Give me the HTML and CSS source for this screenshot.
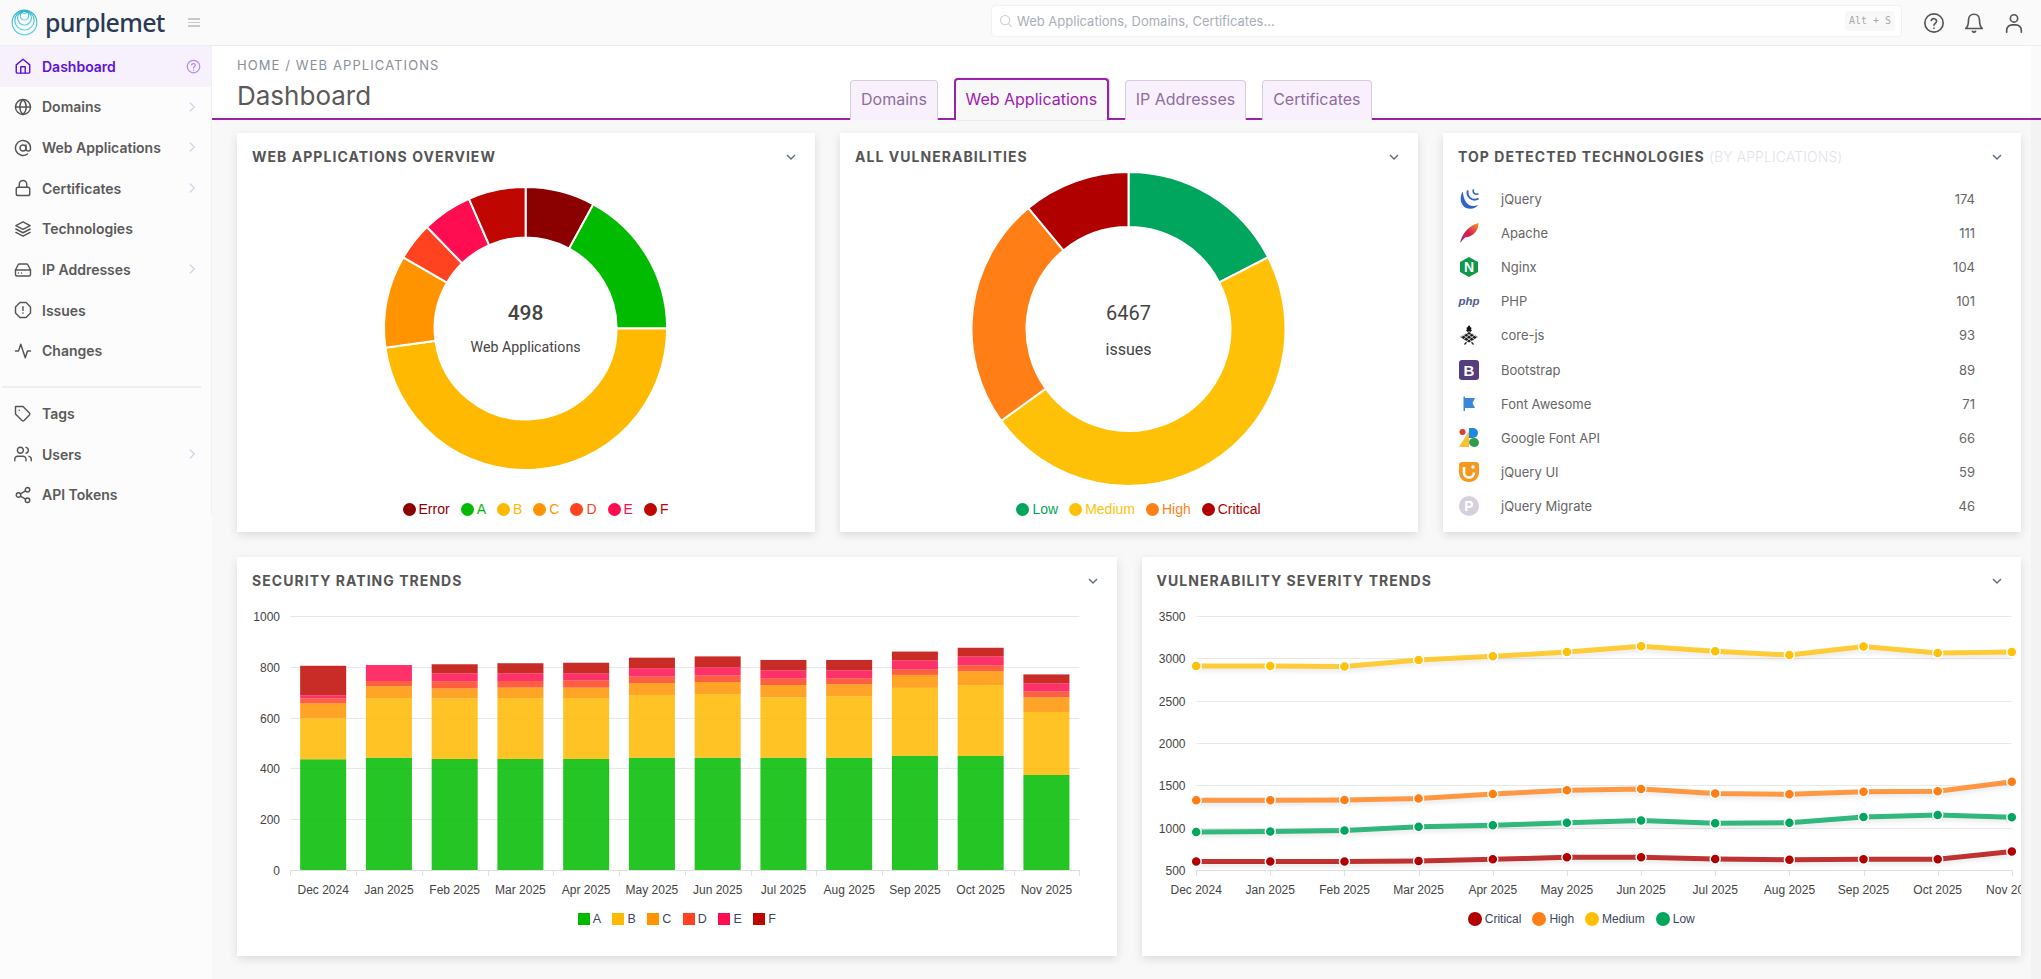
FILE: index.html
```html
<!DOCTYPE html>
<html lang="en">
<head>
<meta charset="utf-8">
<title>Dashboard - Purplemet</title>
<link rel="stylesheet" href="styles.css">
</head>
<body>
<svg class="defs" width="0" height="0" aria-hidden="true">
  <defs>
    <linearGradient id="logoGrad" x1="0" y1="0" x2="0" y2="1"><stop offset="0" stop-color="#2fb4c9"/><stop offset="1" stop-color="#63d3ee"/></linearGradient>
    <linearGradient id="featherGrad" x1="0" y1="1" x2="1" y2="0"><stop offset="0" stop-color="#8a2b8f"/><stop offset=".5" stop-color="#d9234a"/><stop offset="1" stop-color="#f79a2a"/></linearGradient>
  </defs>
</svg>
<div class="app">
  <header class="topbar">
    <div class="brand">
      <svg class="brand-mark" viewBox="0 0 28 28" fill="none" stroke="url(#logoGrad)" stroke-width="1.2"><circle cx="14" cy="14" r="12.8"/><circle cx="14" cy="11.800" r="10"/><circle cx="14" cy="9.400" r="7.200"/><circle cx="14" cy="7" r="4.400"/><path d="M11.500 3.400a2.800 2.800 0 0 0 5 0"/></svg>
      <span class="brand-name">purplemet</span>
      <span class="menu-toggle"><i></i><i></i><i></i></span>
    </div>
    <div class="search">
      <svg class="search-icon" viewBox="0 0 24 24" fill="none" stroke="#ccd0d6" stroke-width="1.8"><circle cx="10.5" cy="10.5" r="8"/><path d="M16.5 16.5l5 5"/></svg>
      <span class="search-text">Web Applications, Domains, Certificates...</span>
      <kbd class="search-key">Alt + S</kbd>
    </div>
    <div class="top-actions">
      <svg class="top-icon" viewBox="0 0 24 24"><circle cx="12" cy="12" r="10"/><path d="M9 9.2a3 3 0 0 1 5.8 1c0 2-2.8 2.4-2.8 4.2"/><path d="M12 17.6v.2"/></svg>
      <svg class="top-icon" viewBox="0 0 24 24"><path d="M12 2.5c-3.6 0-6 2.7-6 6.2 0 5.6-1.2 7.800-3 9.300h18c-1.800-1.500-3-3.700-3-9.300 0-3.500-2.400-6.200-6-6.200z"/><path d="M10.300 21a2 2 0 0 0 3.400 0"/></svg>
      <svg class="top-icon" viewBox="0 0 24 24"><circle cx="12" cy="7" r="4"/><path d="M4 22v-2a6 6 0 0 1 6-6h4a6 6 0 0 1 6 6v2"/></svg>
    </div>
  </header>

  <div class="shell">
    <aside class="sidebar">
      <nav class="nav">
        <a class="nav-item is-active"><svg class="nav-icon" viewBox="0 0 24 24"><path d="M3 10.500L12 3l9 7.500V20a1.500 1.500 0 0 1-1.500 1.500h-15A1.500 1.500 0 0 1 3 20z"/><path d="M9 21.500V13h6v8.500"/></svg><span>Dashboard</span><svg class="nav-help" viewBox="0 0 24 24"><circle cx="12" cy="12" r="10"/><path d="M9 9.200a3 3 0 0 1 5.800 1c0 2-2.800 2.400-2.800 4.200"/><path d="M12 17.600v.2"/></svg></a>
        <a class="nav-item"><svg class="nav-icon" viewBox="0 0 24 24"><circle cx="12" cy="12" r="10"/><path d="M2 12h20"/><path d="M12 2c3 2.800 4.300 6.200 4.300 10S15 19.200 12 22c-3-2.800-4.300-6.200-4.300-10S9 4.800 12 2z"/></svg><span>Domains</span><svg class="nav-chevron" viewBox="0 0 24 24"><path d="M9 6l6 6-6 6"/></svg></a>
        <a class="nav-item"><svg class="nav-icon" viewBox="0 0 24 24"><circle cx="12" cy="12" r="4"/><path d="M16 8v5a3 3 0 0 0 6 0v-1a10 10 0 1 0-4 8"/></svg><span>Web Applications</span><svg class="nav-chevron" viewBox="0 0 24 24"><path d="M9 6l6 6-6 6"/></svg></a>
        <a class="nav-item"><svg class="nav-icon" viewBox="0 0 24 24"><rect x="3" y="11" width="18" height="11" rx="2.500"/><path d="M7 11V7a5 5 0 0 1 10 0v4"/></svg><span>Certificates</span><svg class="nav-chevron" viewBox="0 0 24 24"><path d="M9 6l6 6-6 6"/></svg></a>
        <a class="nav-item"><svg class="nav-icon" viewBox="0 0 24 24"><path d="M12 2.500L2.500 7.500 12 12.500l9.500-5z"/><path d="M2.500 12L12 17l9.500-5"/><path d="M2.500 16.500L12 21.500l9.500-5"/></svg><span>Technologies</span></a>
        <a class="nav-item"><svg class="nav-icon" viewBox="0 0 24 24"><path d="M22 12H2"/><path d="M5.500 5L2 12v6a2 2 0 0 0 2 2h16a2 2 0 0 0 2-2v-6l-3.500-7a2 2 0 0 0-1.800-1H7.300a2 2 0 0 0-1.800 1z"/><path d="M6 16h.01M10 16h.01"/></svg><span>IP Addresses</span><svg class="nav-chevron" viewBox="0 0 24 24"><path d="M9 6l6 6-6 6"/></svg></a>
        <a class="nav-item"><svg class="nav-icon" viewBox="0 0 24 24"><path d="M7.900 2h8.200L22 7.900v8.200L16.100 22H7.900L2 16.100V7.900z"/><path d="M12 7.500v5"/><path d="M12 16v.2"/></svg><span>Issues</span></a>
        <a class="nav-item"><svg class="nav-icon" viewBox="0 0 24 24"><path d="M22 12h-4l-3 9L9 3l-3 9H2"/></svg><span>Changes</span></a>
        <hr class="nav-divider">
        <a class="nav-item"><svg class="nav-icon" viewBox="0 0 24 24"><path d="M20.600 13.400l-7.200 7.200a2 2 0 0 1-2.800 0L2 12V2h10l8.600 8.600a2 2 0 0 1 0 2.800z"/><path d="M7 7h.01"/></svg><span>Tags</span></a>
        <a class="nav-item"><svg class="nav-icon" viewBox="0 0 24 24"><path d="M16 21v-2a4 4 0 0 0-4-4H5a4 4 0 0 0-4 4v2"/><circle cx="8.500" cy="7" r="4"/><path d="M23 21v-2a4 4 0 0 0-3-3.900"/><path d="M16 3.100a4 4 0 0 1 0 7.800"/></svg><span>Users</span><svg class="nav-chevron" viewBox="0 0 24 24"><path d="M9 6l6 6-6 6"/></svg></a>
        <a class="nav-item"><svg class="nav-icon" viewBox="0 0 24 24"><circle cx="18" cy="5" r="3"/><circle cx="6" cy="12" r="3"/><circle cx="18" cy="19" r="3"/><path d="M8.600 13.500l6.800 4M15.400 6.500l-6.800 4"/></svg><span>API Tokens</span></a>
      </nav>
    </aside>

    <main class="main">
      <div class="page-head">
        <div class="page-title">
          <div class="crumbs">HOME / WEB APPLICATIONS</div>
          <h1>Dashboard</h1>
        </div>
        <div class="tabs">
          <a class="tab">Domains</a>
          <a class="tab is-active">Web Applications</a>
          <a class="tab">IP Addresses</a>
          <a class="tab">Certificates</a>
        </div>
      </div>

      <div class="content">
        <div class="row row-three">
          <section class="card">
            <div class="card-head"><h2>Web Applications Overview</h2><svg class="card-chevron" viewBox="0 0 24 24"><path d="M6 9l6 6 6-6"/></svg></div>
            <div class="donut" id="donutApps"></div>
            <ul class="legend legend-donut">
              <li class="c-error"><i></i>Error</li><li class="c-a"><i></i>A</li><li class="c-b"><i></i>B</li><li class="c-c"><i></i>C</li><li class="c-d"><i></i>D</li><li class="c-e"><i></i>E</li><li class="c-f"><i></i>F</li>
            </ul>
          </section>
          <section class="card">
            <div class="card-head"><h2>All Vulnerabilities</h2><svg class="card-chevron" viewBox="0 0 24 24"><path d="M6 9l6 6 6-6"/></svg></div>
            <div class="donut" id="donutVulns"></div>
            <ul class="legend legend-donut">
              <li class="c-low"><i></i>Low</li><li class="c-medium"><i></i>Medium</li><li class="c-high"><i></i>High</li><li class="c-critical"><i></i>Critical</li>
            </ul>
          </section>
          <section class="card">
            <div class="card-head"><h2>Top Detected Technologies <small>(by applications)</small></h2><svg class="card-chevron" viewBox="0 0 24 24"><path d="M6 9l6 6 6-6"/></svg></div>
            <ul class="tech-list">
              <li><svg class="tech-icon" viewBox="0 0 20 20" fill="none" stroke="#2f63c4"><path d="M3.800 2.500C-.500 9 2 19.500 11 19.800c3.500.1 6.500-1.500 8.500-4.300-6 3.500-14.500 1.500-15.700-13z" fill="#2f63c4" stroke="none"/><path d="M8.800 1.500c-1.500 5.500 3.500 11.500 10.700 8.200" stroke-width="1.900"/><path d="M14.500.3c-1.200 3 1 6 5 4.500" stroke-width="1.500"/></svg><span>jQuery</span><b>174</b></li>
              <li><svg class="tech-icon" viewBox="0 0 20 20"><path d="M1 20C3 11 9 3 19.500 0 20 6 15 14 6 14.500 4.500 16 3 18 1 20z" fill="url(#featherGrad)"/></svg><span>Apache</span><b>111</b></li>
              <li><svg class="tech-icon" viewBox="0 0 20 20"><path d="M10 0l9 5v10l-9 5-9-5V5z" fill="#0b9a4a"/><text class="tech-letter" x="10" y="15" font-size="14">N</text></svg><span>Nginx</span><b>104</b></li>
              <li><svg class="tech-icon" viewBox="0 0 20 20"><text class="tech-php" x="10" y="14">php</text></svg><span>PHP</span><b>101</b></li>
              <li><svg class="tech-icon" viewBox="0 0 20 20"><path d="M10 0l1.500 2.200 1.300.8-1 1.200 1.200 1.300L10 8 7 5.500l1.200-1.300-1-1.200 1.300-.8z" fill="#111"/><path d="M10 6.500l8.800 5.500L10 17.500 1.200 12z" fill="#1c1c1c"/><path d="M4 9.800l8.500 6.200M7 8l8.500 6.200M10 6.500l8 5.800M16 9.800L7.500 16M13 8l-8.500 6.200M10 6.500l-8 5.800" stroke="#fff" stroke-width=".7"/><path d="M5.500 19.500l2-2.200M14.500 19.500l-2-2.200" stroke="#222" stroke-width="1.300"/></svg><span>core-js</span><b>93</b></li>
              <li><svg class="tech-icon" viewBox="0 0 20 20"><rect width="20" height="20" rx="3" fill="#563d7c"/><text class="tech-letter" x="10" y="15.500" font-size="15">B</text></svg><span>Bootstrap</span><b>89</b></li>
              <li><svg class="tech-icon" viewBox="0 0 20 20"><path d="M4.500 2.500h1.500v1.500h10l-2.500 5 2.500 5H6v3H4.500z" fill="#3a87d9"/></svg><span>Font Awesome</span><b>71</b></li>
              <li><svg class="tech-icon" viewBox="0 0 20 20"><path d="M0 19L10 3v16z" fill="#fbc02d"/><circle cx="3.500" cy="4" r="3" fill="#e53935"/><path d="M10 0h4a5 5 0 0 1 0 10h-4z" fill="#1e88e5"/><path d="M15 19a5 5 0 0 1-5-5 5 5 0 0 1 5-4 5 5 0 0 1 5 4.500 5 5 0 0 1-5 4.500z" fill="#2e9b4f"/></svg><span>Google Font API</span><b>66</b></li>
              <li><svg class="tech-icon" viewBox="0 0 20 20"><path d="M0 3a3 3 0 0 1 3-3h14a3 3 0 0 1 3 3v7c0 6-4 10-10 10S0 16 0 10z" fill="#f7971d"/><path d="M5 5v5.500a5 5 0 0 0 10 0" fill="none" stroke="#fff" stroke-width="2.600"/><circle cx="14" cy="5" r="1.800" fill="#fff"/></svg><span>jQuery UI</span><b>59</b></li>
              <li><svg class="tech-icon" viewBox="0 0 20 20"><circle cx="10" cy="10" r="10" fill="#d6d0de"/><text class="tech-letter" x="10" y="15" font-size="14">P</text></svg><span>jQuery Migrate</span><b>46</b></li>
            </ul>
          </section>
        </div>

        <div class="row row-two">
          <section class="card">
            <div class="card-head"><h2>Security Rating Trends</h2><svg class="card-chevron" viewBox="0 0 24 24"><path d="M6 9l6 6 6-6"/></svg></div>
            <div class="trend" id="barChart"></div>
            <ul class="legend legend-trend legend-bars">
              <li class="c-a"><i class="square"></i>A</li><li class="c-b"><i class="square"></i>B</li><li class="c-c"><i class="square"></i>C</li><li class="c-d"><i class="square"></i>D</li><li class="c-e"><i class="square"></i>E</li><li class="c-f"><i class="square"></i>F</li>
            </ul>
          </section>
          <section class="card">
            <div class="card-head"><h2>Vulnerability Severity Trends</h2><svg class="card-chevron" viewBox="0 0 24 24"><path d="M6 9l6 6 6-6"/></svg></div>
            <div class="trend" id="lineChart"></div>
            <ul class="legend legend-trend legend-lines">
              <li class="c-critical"><i></i>Critical</li><li class="c-high"><i></i>High</li><li class="c-medium"><i></i>Medium</li><li class="c-low"><i></i>Low</li>
            </ul>
          </section>
        </div>
      </div>
      <div class="scroll-track"></div>
    </main>
  </div>
</div>
<script src="charts.js"></script>
</body>
</html>
```
FILE: styles.css
```css
* { box-sizing: border-box; }
html, body { margin: 0; height: 100%; overflow: hidden; }
body { font-family: Inter, "Liberation Sans", sans-serif; color: #555; background: #f8f8f8; }
.defs { position: absolute; }
ul { list-style: none; margin: 0; padding: 0; }
h1, h2 { margin: 0; }

.app { display: flex; flex-direction: column; height: 979px; }

/* top bar */
.topbar { flex: 0 0 46px; display: flex; align-items: flex-start; background: #fafafa; border-bottom: 1px solid #eeeeee; }
.brand { flex: 0 0 991px; display: flex; align-items: center; height: 45px; padding-left: 11px; }
.brand-mark { width: 27px; height: 27px; flex: none; }
.brand-name { margin-left: 7px; font-family: "Noto Sans", sans-serif; font-size: 25px; font-weight: 500; letter-spacing: -.7px; line-height: 45px; color: #2b3a55; }
.menu-toggle { margin-left: 23px; display: flex; flex-direction: column; gap: 2px; width: 12px; }
.menu-toggle i { display: block; height: 1.5px; background: #c9c9c9; }
.search { flex: 0 0 911px; height: 32px; margin-top: 5px; display: flex; align-items: center; padding: 0 6px 0 7px; background: #fff; border: 1px solid #f1f1f1; border-radius: 4px; }
.search-icon { width: 14px; height: 14px; flex: none; }
.search-text { margin-left: 4px; font-size: 13px; color: #a9aeb8; }
.search-key { margin-left: auto; width: 50px; height: 20px; line-height: 19px; text-align: center; font-family: "DejaVu Sans Mono", monospace; font-size: 10px; color: #a8a8a8; background: #f8f8f8; border-radius: 4px; }
.top-actions { flex: 1; display: flex; gap: 18px; padding: 12px 0 0 21px; }
.top-icon { width: 22px; height: 22px; fill: none; stroke: #555; stroke-width: 1.800; stroke-linecap: round; stroke-linejoin: round; }

/* sidebar */
.shell { flex: 1; display: flex; min-height: 0; }
.sidebar { flex: 0 0 212px; background: #fcfcfc; }
.nav { height: 469px; border-right: 1px solid #f0f0f0; display: flex; flex-direction: column; }
.nav-item { position: relative; flex: 0 0 40.660px; display: flex; align-items: center; padding-left: 14px; font-size: 14px; font-weight: 600; color: #5a5a5a; }
.nav-item span { margin-left: 10px; }
.nav-icon { width: 18px; height: 18px; flex: none; fill: none; stroke: #555; stroke-width: 1.900; stroke-linecap: round; stroke-linejoin: round; }
.nav-item.is-active { background: #f7f0fd; color: #5c14d4; }
.nav-item.is-active .nav-icon { stroke: #5c14d4; }
.nav-help { position: absolute; left: 186px; top: 13px; width: 15px; height: 15px; fill: none; stroke: #b48af0; stroke-width: 2; stroke-linecap: round; }
.nav-chevron { position: absolute; left: 183px; top: 11px; width: 18px; height: 18px; fill: none; stroke: #dcd3f4; stroke-width: 2; }
.nav-divider { flex: none; width: 199px; height: 2px; margin: 15px 0 5px 2px; border: 0; background: #eeeeee; }

/* main */
.main { position: relative; flex: 1; min-width: 0; display: flex; flex-direction: column; }
.page-head { flex: 0 0 74px; display: flex; align-items: flex-end; background: #fff; border-bottom: 2px solid #9c22ab; }
.page-title { flex: 0 0 638px; align-self: stretch; padding: 11px 0 0 25px; }
.crumbs { font-size: 13px; line-height: 16px; letter-spacing: 1.090px; color: #8a8f99; }
h1 { margin-top: 6px; font-size: 26px; line-height: 34px; font-weight: 400; color: #5a5a5a; }
.tabs { display: flex; gap: 16px; align-items: flex-end; margin-bottom: -2px; }
.tab { height: 40px; padding: 0 10px; line-height: 36px; font-size: 16px; color: #8f6d9e; background: #f8f0fd; border: 1px solid #d8ccd8; border-bottom: 0; border-radius: 4px 4px 0 0; }
.tab.is-active { height: 42px; padding: 0 9.500px; line-height: 38px; color: #a020b0; background: #f8f8f8; border: 2px solid #9c22ab; border-bottom: 0; box-shadow: 1px 0 2px rgba(0, 0, 0, .2); }
.content { flex: 1; padding: 13px 20px 0 25px; display: flex; flex-direction: column; gap: 25px; }
.row { display: grid; gap: 25px; height: 399px; flex: none; }
.row-three { grid-template-columns: repeat(3, 1fr); }
.row-two { grid-template-columns: repeat(2, 1fr); }
.scroll-track { position: absolute; top: 0; right: 0; bottom: 0; width: 10px; background: rgba(0, 0, 0, .018); pointer-events: none; }

/* cards */
.card { min-width: 0; display: flex; flex-direction: column; background: #fff; box-shadow: 0 3px 9px rgba(0, 0, 0, .12); }
.card-head { flex: none; display: flex; justify-content: space-between; align-items: center; height: 34px; padding: 14px 16px 0 15px; }
.card-head h2 { font-size: 14px; line-height: 20px; font-weight: 700; letter-spacing: 1.040px; text-transform: uppercase; color: #555; white-space: nowrap; }
.card-head small { font-size: 14px; font-weight: 300; letter-spacing: .1px; color: #dfe3ea; }
.card-chevron { width: 16px; height: 16px; flex: none; fill: none; stroke: #5e6b7c; stroke-width: 2; }

/* donut cards */
.donut { flex: 0 0 326px; }
.donut svg, .trend svg { display: block; width: 100%; height: 100%; overflow: hidden; }
.donut-total { font-family: Roboto, sans-serif; text-anchor: middle; fill: #444; font-size: 21px; font-weight: 500; }
.donut-total.light { font-size: 20px; font-weight: 400; }
.donut-label { font-family: Roboto, sans-serif; text-anchor: middle; fill: #444; font-size: 14.200px; }
.donut-label.large { font-size: 16px; }
.slice { stroke: #fff; stroke-width: 2; }

/* legends */
.legend { display: flex; justify-content: center; align-items: center; font-family: "Liberation Sans", sans-serif; }
.legend li { display: flex; align-items: center; }
.legend i { display: block; width: 13px; height: 13px; border-radius: 50%; background: currentColor; margin-right: 3px; }
.legend-donut { height: 32px; padding-left: 19px; gap: 11px; font-size: 14px; }
.legend-trend { height: 28px; }
.legend-bars { gap: 11.500px; font-size: 12.500px; }
.legend-lines { gap: 11px; font-size: 12px; }
.legend-lines i { width: 14px; height: 14px; }
.legend-trend li { color: #3b4660; }
.legend-trend i.square { width: 12px; height: 12px; border-radius: 0; }
.c-error { color: #8b0000; }
.c-a { color: #00bb00; }
.c-b { color: #ffb900; }
.c-c { color: #ff9400; }
.c-d { color: #ff4320; }
.c-e { color: #ff0d50; }
.c-f { color: #c00600; }
.c-low { color: #00a65e; }
.c-medium { color: #ffc107; }
.c-high { color: #ff7f16; }
.c-critical { color: #b00000; }
.legend-trend .c-a i { background: #00bb00; }
.legend-trend .c-b i { background: #ffb900; }
.legend-trend .c-c i { background: #ff9400; }
.legend-trend .c-d i { background: #ff4320; }
.legend-trend .c-e i { background: #ff0d50; }
.legend-trend .c-f i { background: #c00600; }
.legend-trend .c-critical i { background: #b00000; }
.legend-trend .c-high i { background: #ff7f16; }
.legend-trend .c-medium i { background: #ffc107; }
.legend-trend .c-low i { background: #00a65e; }

/* technologies */
.tech-list { padding: 15px 46px 0 16px; }
.tech-list li { display: flex; align-items: center; height: 34.100px; font-size: 13px; color: #666; }
.tech-list span { margin-left: 22px; flex: 1; }
.tech-list b { font-weight: 400; }
.tech-icon { width: 20px; height: 20px; flex: none; overflow: visible; }
.tech-letter { font-family: "Liberation Sans", sans-serif; font-weight: 700; fill: #fff; text-anchor: middle; }
.tech-php { font-family: "Liberation Sans", sans-serif; font-weight: 700; font-style: italic; font-size: 11.500px; fill: #4f5b93; text-anchor: middle; }

/* trend charts */
.trend { flex: 0 0 314px; }
.grid-line { stroke: #e8e8e8; stroke-width: 1; }
.axis-line { stroke: #e0e0e0; stroke-width: 1; fill: none; }
.axis-label { font-family: "Liberation Sans", sans-serif; font-size: 12px; fill: #444; }
.axis-label.y { text-anchor: end; }
.axis-label.x { text-anchor: middle; }
.bar { opacity: .85; }
.trend-line { fill: none; stroke-width: 5; stroke-opacity: .8; filter: drop-shadow(0 3px 2px rgba(0, 0, 0, .1)); }
.marker { stroke: #fff; stroke-width: 1.500; }
```
FILE: charts.js
```js
(function () {
  var NS = 'http://www.w3.org/2000/svg';
  var MONTHS = ['Dec 2024', 'Jan 2025', 'Feb 2025', 'Mar 2025', 'Apr 2025', 'May 2025', 'Jun 2025', 'Jul 2025', 'Aug 2025', 'Sep 2025', 'Oct 2025', 'Nov 2025'];

  function el(tag, attrs, parent, text) {
    var node = document.createElementNS(NS, tag);
    Object.keys(attrs).forEach(function (k) { node.setAttribute(k, attrs[k]); });
    if (text !== undefined) node.textContent = text;
    parent.appendChild(node);
    return node;
  }

  function root(id, w, h) {
    return el('svg', { viewBox: '0 0 ' + w + ' ' + h }, document.getElementById(id));
  }

  function point(cx, cy, r, deg) {
    var a = deg * Math.PI / 180;
    return (cx + r * Math.sin(a)).toFixed(2) + ' ' + (cy - r * Math.cos(a)).toFixed(2);
  }

  function donut(id, cfg) {
    var svg = root(id, 578, 326);
    var from = 0;
    cfg.slices.forEach(function (s) {
      var to = s[0];
      var large = to - from > 180 ? 1 : 0;
      var d = 'M' + point(cfg.cx, cfg.cy, cfg.R, from) +
        'A' + cfg.R + ' ' + cfg.R + ' 0 ' + large + ' 1 ' + point(cfg.cx, cfg.cy, cfg.R, to) +
        'L' + point(cfg.cx, cfg.cy, cfg.r, to) +
        'A' + cfg.r + ' ' + cfg.r + ' 0 ' + large + ' 0 ' + point(cfg.cx, cfg.cy, cfg.r, from) + 'Z';
      el('path', { d: d, fill: s[1], 'class': 'slice' }, svg);
      from = to;
    });
    el('text', { x: cfg.cx, y: cfg.totalY, 'class': cfg.totalClass }, svg, cfg.total);
    el('text', { x: cfg.cx, y: cfg.labelY, 'class': cfg.labelClass }, svg, cfg.label);
  }

  donut('donutApps', {
    cx: 288.6, cy: 161.5, R: 141.5, r: 91,
    slices: [[28.6, '#8b0000'], [90, '#00bb00'], [262.2, '#ffb900'], [300.2, '#ff9400'], [315.8, '#ff4320'], [336.4, '#ff0d50'], [360, '#c00600']],
    total: '498', totalY: 153, totalClass: 'donut-total',
    label: 'Web Applications', labelY: 185, labelClass: 'donut-label'
  });

  donut('donutVulns', {
    cx: 288.5, cy: 162, R: 157, r: 102,
    slices: [[62.8, '#00a65e'], [234.2, '#ffc107'], [320.4, '#ff7f16'], [360, '#b00000']],
    total: '6467', totalY: 153, totalClass: 'donut-total light',
    label: 'issues', labelY: 188, labelClass: 'donut-label large'
  });

  function frame(svg, cfg) {
    var span = cfg.max - cfg.min;
    cfg.ticks.forEach(function (t) {
      var y = Math.round(cfg.y0 - (t - cfg.min) / span * (cfg.y0 - cfg.yTop)) + 0.5;
      if (t !== cfg.min) el('line', { x1: cfg.left, x2: cfg.right, y1: y, y2: y, 'class': 'grid-line' }, svg);
      el('text', { x: cfg.labelX, y: y + 4, 'class': 'axis-label y' }, svg, t);
    });
    el('line', { x1: cfg.left, x2: cfg.right, y1: cfg.y0 + 0.5, y2: cfg.y0 + 0.5, 'class': 'axis-line' }, svg);
  }

  function bars() {
    var svg = root('barChart', 879.5, 314);
    var cfg = { left: 53.3, right: 842.3, y0: 279, yTop: 25, min: 0, max: 1000, labelX: 43, ticks: [0, 200, 400, 600, 800, 1000] };
    frame(svg, cfg);
    var colors = ['#00bb00', '#ffb900', '#ff9400', '#ff4320', '#ff0d50', '#c00600'];
    var stacks = [
      [436, 597, 656, 676, 688, 804], [442, 677, 724, 744, 807, 807], [437, 676, 715, 743, 774, 810],
      [437, 677, 718, 744, 774, 814], [437, 677, 718, 747, 774, 816], [442, 689, 736, 762, 794, 836],
      [442, 693, 740, 766, 798, 841], [442, 680, 728, 755, 786, 827], [442, 684, 731, 755, 786, 827],
      [449, 717, 768, 790, 825, 860], [449, 728, 783, 806, 841, 875], [374, 622, 680, 703, 735, 770]
    ];
    var slot = (cfg.right - cfg.left) / 12;
    var scale = (cfg.y0 - cfg.yTop) / cfg.max;
    var width = slot * 0.7;
    for (var t = 0; t <= 12; t++) {
      var tx = Math.round(cfg.left + t * slot) + 0.5;
      el('line', { x1: tx, x2: tx, y1: cfg.y0, y2: cfg.y0 + 6, 'class': 'axis-line' }, svg);
    }
    stacks.forEach(function (stack, i) {
      var x = cfg.left + i * slot + (slot - width) / 2;
      var prev = 0;
      stack.forEach(function (top, s) {
        if (top > prev) {
          el('rect', { x: x.toFixed(2), width: width.toFixed(2), y: (cfg.y0 - top * scale).toFixed(2), height: ((top - prev) * scale).toFixed(2), fill: colors[s], 'class': 'bar' }, svg);
        }
        prev = top;
      });
      el('text', { x: (cfg.left + (i + 0.5) * slot).toFixed(1), y: 303, 'class': 'axis-label x' }, svg, MONTHS[i]);
    });
  }

  function lines() {
    var svg = root('lineChart', 879.5, 314);
    var cfg = { left: 54.2, right: 869.8, y0: 279, yTop: 25, min: 500, max: 3500, labelX: 43.5, ticks: [500, 1000, 1500, 2000, 2500, 3000, 3500] };
    frame(svg, cfg);
    var step = (cfg.right - cfg.left) / 11;
    var series = [
      ['#ffc107', [2909, 2909, 2902, 2980, 3024, 3075, 3142, 3083, 3039, 3138, 3063, 3075]],
      ['#ff7f16', [1323, 1323, 1327, 1343, 1398, 1441, 1457, 1402, 1394, 1425, 1429, 1543]],
      ['#00a65e', [949, 953, 965, 1012, 1028, 1059, 1083, 1051, 1059, 1126, 1150, 1122]],
      ['#b00000', [602, 602, 602, 606, 626, 650, 650, 630, 622, 626, 626, 717]]
    ];
    function px(i) { return cfg.left + i * step; }
    function py(v) { return cfg.y0 - (v - cfg.min) / (cfg.max - cfg.min) * (cfg.y0 - cfg.yTop); }
    MONTHS.forEach(function (m, i) {
      var tx = Math.round(px(i)) + 0.5;
      el('line', { x1: tx, x2: tx, y1: cfg.y0, y2: cfg.y0 + 6, 'class': 'axis-line' }, svg);
      el('text', { x: px(i).toFixed(1), y: 303, 'class': 'axis-label x' }, svg, m);
    });
    series.forEach(function (s) {
      var pts = s[1].map(function (v, i) { return px(i).toFixed(1) + ',' + py(v).toFixed(1); }).join(' ');
      el('polyline', { points: pts, stroke: s[0], 'class': 'trend-line' }, svg);
    });
    series.forEach(function (s) {
      s[1].forEach(function (v, i) {
        el('circle', { cx: px(i).toFixed(1), cy: py(v).toFixed(1), r: 5, fill: s[0], 'class': 'marker' }, svg);
      });
    });
  }

  bars();
  lines();
})();
```
